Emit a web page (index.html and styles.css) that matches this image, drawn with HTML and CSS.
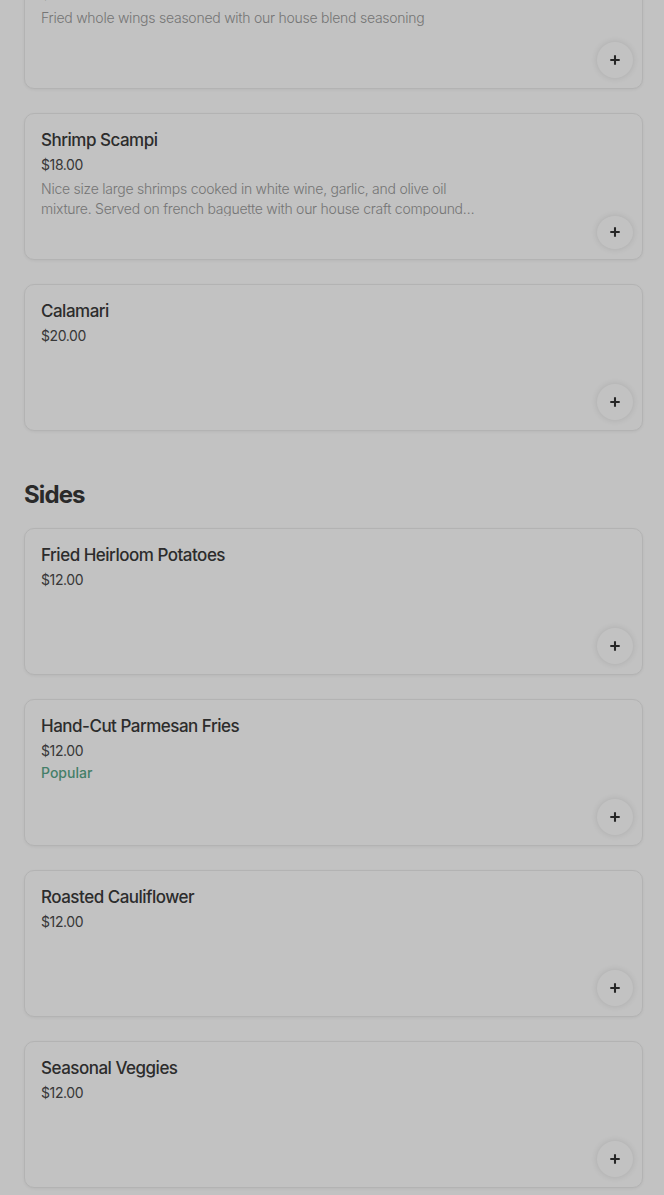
FILE: index.html
```html
<!DOCTYPE html>
<html lang="en">
<head>
<meta charset="UTF-8">
<meta name="viewport" content="width=device-width, initial-scale=1.0">
<title>Menu</title>
<link rel="stylesheet" href="styles.css">
</head>
<body>
<div class="menu">
    <section class="section first">
        <div class="items">
            <div class="item">
                <h3 class="item-name">Chicken Wings</h3>
                <div class="item-price">$16.00</div>
                <p class="item-desc">Fried whole wings seasoned with our house blend seasoning</p>
                <button class="add-btn" aria-label="Add">
                    <svg width="14" height="14" viewBox="0 0 14 14"><path d="M7 1.5v11M1.5 7h11" stroke="currentColor" stroke-width="2.4"/></svg>
                </button>
            </div>
            <div class="item">
                <h3 class="item-name">Shrimp Scampi</h3>
                <div class="item-price">$18.00</div>
                <p class="item-desc">Nice size large shrimps cooked in white wine, garlic, and olive oil mixture. Served on french baguette with our house craft compound butter and fresh herbs.</p>
                <button class="add-btn" aria-label="Add">
                    <svg width="14" height="14" viewBox="0 0 14 14"><path d="M7 1.5v11M1.5 7h11" stroke="currentColor" stroke-width="2.4"/></svg>
                </button>
            </div>
            <div class="item">
                <h3 class="item-name">Calamari</h3>
                <div class="item-price">$20.00</div>
                <button class="add-btn" aria-label="Add">
                    <svg width="14" height="14" viewBox="0 0 14 14"><path d="M7 1.5v11M1.5 7h11" stroke="currentColor" stroke-width="2.4"/></svg>
                </button>
            </div>
        </div>
    </section>

    <section class="section">
        <h2 class="section-title">Sides</h2>
        <div class="items">
            <div class="item">
                <h3 class="item-name">Fried Heirloom Potatoes</h3>
                <div class="item-price">$12.00</div>
                <button class="add-btn" aria-label="Add">
                    <svg width="14" height="14" viewBox="0 0 14 14"><path d="M7 1.5v11M1.5 7h11" stroke="currentColor" stroke-width="2.4"/></svg>
                </button>
            </div>
            <div class="item">
                <h3 class="item-name">Hand-Cut Parmesan Fries</h3>
                <div class="item-price">$12.00</div>
                <div class="item-tag">Popular</div>
                <button class="add-btn" aria-label="Add">
                    <svg width="14" height="14" viewBox="0 0 14 14"><path d="M7 1.5v11M1.5 7h11" stroke="currentColor" stroke-width="2.4"/></svg>
                </button>
            </div>
            <div class="item">
                <h3 class="item-name">Roasted Cauliflower</h3>
                <div class="item-price">$12.00</div>
                <button class="add-btn" aria-label="Add">
                    <svg width="14" height="14" viewBox="0 0 14 14"><path d="M7 1.5v11M1.5 7h11" stroke="currentColor" stroke-width="2.4"/></svg>
                </button>
            </div>
            <div class="item">
                <h3 class="item-name">Seasonal Veggies</h3>
                <div class="item-price">$12.00</div>
                <button class="add-btn" aria-label="Add">
                    <svg width="14" height="14" viewBox="0 0 14 14"><path d="M7 1.5v11M1.5 7h11" stroke="currentColor" stroke-width="2.4"/></svg>
                </button>
            </div>
        </div>
    </section>
</div>

<!-- dimmed backdrop behind an open dialog -->
<div class="backdrop"></div>
</body>
</html>
```

FILE: styles.css
```css
body {
    font-family: Inter, 'Noto Sans', sans-serif;
    margin: 0;
    padding: 0;
    background-color: #fff;
    color: #3a3a3a;
}
.menu {
    padding: 0 21px 40px 24px;
}
.section {
    margin-top: 48px;
}
.section.first {
    margin-top: -58px;
}
.section-title {
    font-size: 24px;
    line-height: 32px;
    font-weight: 700;
    letter-spacing: -0.9px;
    color: #383838;
    margin: 0 0 17px;
}
.items {
    display: flex;
    flex-direction: column;
    gap: 24px;
}
.item {
    box-sizing: border-box;
    height: 147px;
    display: flex;
    flex-direction: column;
    padding: 14px 16px 10px;
    border: 1px solid #ececec;
    border-radius: 10px;
    box-shadow: 0 1px 3px rgba(0, 0, 0, 0.06);
    background-color: #fff;
}
.item-name {
    font-size: 17px;
    line-height: 24px;
    font-weight: 500;
    letter-spacing: -0.5px;
    color: #3a3a3a;
    margin: 0;
}
.item-price {
    font-size: 14px;
    line-height: 20px;
    margin-top: 3px;
    color: #4a4a4a;
    letter-spacing: -0.4px;
}
.item-desc {
    font-size: 14px;
    line-height: 20px;
    font-weight: 300;
    color: #9a9a9a;
    margin: 4px 0 0;
    max-width: 450px;
    display: -webkit-box;
    -webkit-line-clamp: 2;
    -webkit-box-orient: vertical;
    overflow: hidden;
    letter-spacing: -0.25px;
}
.item-tag {
    font-size: 14px;
    line-height: 20px;
    font-weight: 500;
    color: #5aa88a;
    margin-top: 2px;
}
.add-btn {
    margin-top: auto;
    margin-right: -7px;
    align-self: flex-end;
    width: 36px;
    height: 36px;
    border-radius: 50%;
    border: none;
    background-color: #fff;
    color: #333;
    box-shadow: 0 0 6px rgba(0, 0, 0, 0.12);
    display: flex;
    align-items: center;
    justify-content: center;
    padding: 0;
    cursor: pointer;
}
.add-btn svg {
    width: 12px;
    height: 12px;
}
.backdrop {
    position: fixed;
    inset: 0;
    background-color: rgba(0, 0, 0, 0.24);
}
```
